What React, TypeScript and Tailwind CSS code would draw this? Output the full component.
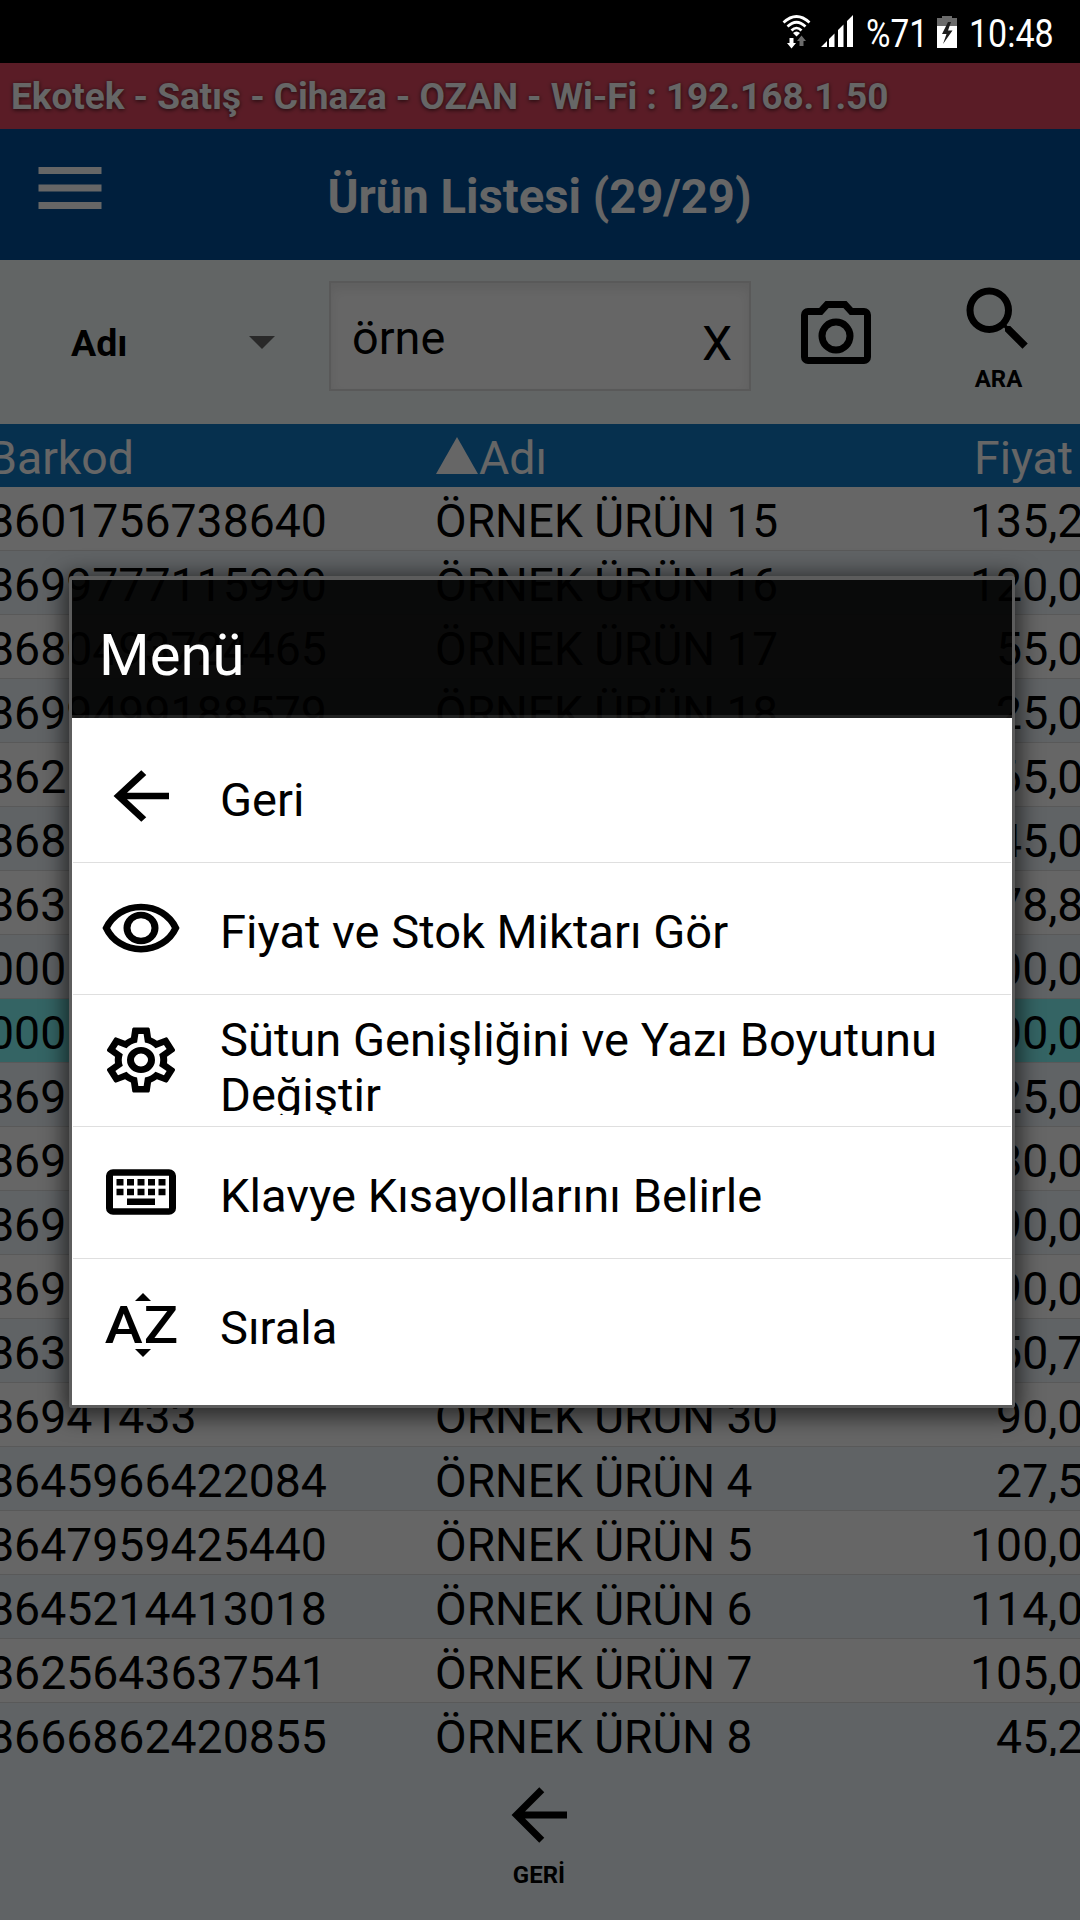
import type { ReactNode } from "react"

interface Product {
  barcode: string
  name: string
  price: string
  selected?: boolean
}

const products: Product[] = [
  { barcode: "8601756738640", name: "ÖRNEK ÜRÜN 15", price: "135,20" },
  { barcode: "8699777115990", name: "ÖRNEK ÜRÜN 16", price: "120,00" },
  { barcode: "8680493724465", name: "ÖRNEK ÜRÜN 17", price: "55,00" },
  { barcode: "8699499188579", name: "ÖRNEK ÜRÜN 18", price: "25,00" },
  { barcode: "862", name: "", price: "65,00" },
  { barcode: "868", name: "", price: "45,00" },
  { barcode: "863", name: "", price: "78,80" },
  { barcode: "000", name: "", price: "00,00" },
  { barcode: "000", name: "", price: "00,00", selected: true },
  { barcode: "869", name: "", price: "25,00" },
  { barcode: "869", name: "", price: "80,00" },
  { barcode: "869", name: "", price: "90,00" },
  { barcode: "869", name: "", price: "90,00" },
  { barcode: "863", name: "", price: "50,70" },
  { barcode: "86941433", name: "ÖRNEK ÜRÜN 30", price: "90,00" },
  { barcode: "8645966422084", name: "ÖRNEK ÜRÜN 4", price: "27,50" },
  { barcode: "8647959425440", name: "ÖRNEK ÜRÜN 5", price: "100,00" },
  { barcode: "8645214413018", name: "ÖRNEK ÜRÜN 6", price: "114,00" },
  { barcode: "8625643637541", name: "ÖRNEK ÜRÜN 7", price: "105,00" },
  { barcode: "8666862420855", name: "ÖRNEK ÜRÜN 8", price: "45,20" },
]

const paths = {
  menu: "M3,6H21V8H3V6M3,11H21V13H3V11M3,16H21V18H3V16Z",
  back: "M20,11V13H8L13.5,18.5L12.08,19.92L4.16,12L12.08,4.08L13.5,5.5L8,11H20Z",
  camera:
    "M20,4H16.83L15,2H9L7.17,4H4A2,2 0 0,0 2,6V18A2,2 0 0,0 4,20H20A2,2 0 0,0 22,18V6A2,2 0 0,0 20,4M20,18H4V6H8.05L9.88,4H14.12L15.95,6H20V18M12,7A5,5 0 0,0 7,12A5,5 0 0,0 12,17A5,5 0 0,0 17,12A5,5 0 0,0 12,7M12,15A3,3 0 0,1 9,12A3,3 0 0,1 12,9A3,3 0 0,1 15,12A3,3 0 0,1 12,15Z",
  search:
    "M9.5,3A6.5,6.5 0 0,1 16,9.5C16,11.11 15.41,12.59 14.44,13.73L14.71,14H15.5L20.5,19L19,20.5L14,15.5V14.71L13.73,14.44C12.59,15.41 11.11,16 9.5,16A6.5,6.5 0 0,1 3,9.5A6.5,6.5 0 0,1 9.5,3M9.5,5C7,5 5,7 5,9.5C5,12 7,14 9.5,14C12,14 14,12 14,9.5C14,7 12,5 9.5,5Z",
  cog: "M12,8A4,4 0 0,1 16,12A4,4 0 0,1 12,16A4,4 0 0,1 8,12A4,4 0 0,1 12,8M12,10A2,2 0 0,0 10,12A2,2 0 0,0 12,14A2,2 0 0,0 14,12A2,2 0 0,0 12,10M10,22C9.75,22 9.54,21.82 9.5,21.58L9.13,18.93C8.5,18.68 7.96,18.34 7.44,17.94L4.95,18.95C4.73,19.03 4.46,18.95 4.34,18.73L2.34,15.27C2.21,15.05 2.27,14.78 2.46,14.63L4.57,12.97L4.5,12L4.57,11L2.46,9.37C2.27,9.22 2.21,8.95 2.34,8.73L4.34,5.27C4.46,5.05 4.73,4.96 4.95,5.05L7.44,6.05C7.96,5.66 8.5,5.32 9.13,5.07L9.5,2.42C9.54,2.18 9.75,2 10,2H14C14.25,2 14.46,2.18 14.5,2.42L14.87,5.07C15.5,5.32 16.04,5.66 16.56,6.05L19.05,5.05C19.27,4.96 19.54,5.05 19.66,5.27L21.66,8.73C21.79,8.95 21.73,9.22 21.54,9.37L19.43,11L19.5,12L19.43,13L21.54,14.63C21.73,14.78 21.79,15.05 21.66,15.27L19.66,18.73C19.54,18.95 19.27,19.04 19.05,18.95L16.56,17.95C16.04,18.34 15.5,18.68 14.87,18.93L14.5,21.58C14.46,21.82 14.25,22 14,22H10M11.25,4L10.88,6.61C9.68,6.86 8.62,7.5 7.85,8.39L5.44,7.35L4.69,8.65L6.8,10.2C6.4,11.37 6.4,12.64 6.8,13.8L4.68,15.36L5.43,16.66L7.86,15.62C8.63,16.5 9.68,17.14 10.87,17.38L11.24,20H12.76L13.13,17.39C14.32,17.14 15.37,16.5 16.14,15.62L18.57,16.66L19.32,15.36L17.2,13.81C17.6,12.64 17.6,11.37 17.2,10.2L19.31,8.65L18.56,7.35L16.15,8.39C15.38,7.5 14.32,6.86 13.12,6.62L12.75,4H11.25Z",
  keyboard:
    "M4,5A2,2 0 0,0 2,7V17A2,2 0 0,0 4,19H20A2,2 0 0,0 22,17V7A2,2 0 0,0 20,5H4M4,7H20V17H4V7M5,8V10H7V8H5M8,8V10H10V8H8M11,8V10H13V8H11M14,8V10H16V8H14M17,8V10H19V8H17M5,11V13H7V11H5M8,11V13H10V11H8M11,11V13H13V11H11M14,11V13H16V11H14M17,11V13H19V11H17M8,14V16H16V14H8Z",
}

function Icon({ d, className }: { d: string; className: string }) {
  return (
    <svg viewBox="0 0 24 24" preserveAspectRatio="none" fill="currentColor" className={`shrink-0 ${className}`}>
      <path d={d} />
    </svg>
  )
}

function EyeIcon() {
  return (
    <svg
      viewBox="0 0 24 24"
      preserveAspectRatio="none"
      fill="none"
      stroke="currentColor"
      strokeWidth="2"
      className="h-[78px] w-[84px] shrink-0"
    >
      <path d="M2.080 12C3.750 8.090 7.550 5.500 12 5.500S20.250 8.090 21.920 12C20.250 15.910 16.450 18.500 12 18.500S3.750 15.910 2.080 12Z" />
      <circle cx="12" cy="12" r="4" />
    </svg>
  )
}

function SortIcon() {
  return (
    <div className="flex h-[78px] w-[84px] shrink-0 flex-col items-center pt-2 pl-1">
      <svg viewBox="0 0 16 8" className="h-2 w-4 shrink-0" fill="currentColor">
        <path d="M0 8L8 0L16 8Z" />
      </svg>
      <div className="-ml-1 flex h-12 shrink-0 scale-x-110 gap-[1px] text-[52px] leading-[49px] font-medium">
        <span>A</span>
        <span>Z</span>
      </div>
      <svg viewBox="0 0 16 8" className="h-2 w-4 shrink-0" fill="currentColor">
        <path d="M0 0L8 8L16 0Z" />
      </svg>
    </div>
  )
}

const menuItems: { label: string; icon: ReactNode }[] = [
  { label: "Geri", icon: <Icon d={paths.back} className="h-[78px] w-[84px]" /> },
  { label: "Fiyat ve Stok Miktarı Gör", icon: <EyeIcon /> },
  {
    label: "Sütun Genişliğini ve Yazı Boyutunu Değiştir",
    icon: <Icon d={paths.cog} className="h-[78px] w-[84px]" />,
  },
  { label: "Klavye Kısayollarını Belirle", icon: <Icon d={paths.keyboard} className="h-[78px] w-[84px]" /> },
  { label: "Sırala", icon: <SortIcon /> },
]

function StatusBar() {
  return (
    <div className="flex h-[63px] shrink-0 bg-black text-[39.5px] leading-[67px] text-white">
      <svg viewBox="0 0 30 34" className="mt-[15px] ml-[782px] h-[34px] w-[30px] shrink-0" fill="none">
        <g stroke="white" strokeWidth="2.7">
          <path d="M1.5 7.5Q14.5 -4.5 27.5 7.5" />
          <path d="M5.5 11.5Q14.5 3 23.5 11.5" />
          <path d="M9.5 15.5Q14.5 10.5 19.5 15.5" />
        </g>
        <path d="M11 18Q14.5 15 18 18L14.5 21.5Z" fill="white" />
        <path d="M7.5 23H11.5V28H14L9.5 33.5L5 28H7.5Z" fill="white" />
        <path d="M17.5 31H21.5V26H24L19.5 20.5L15 26H17.5Z" fill="#6b6b6b" />
      </svg>
      <svg viewBox="0 0 32 32" className="mt-[15px] ml-[9px] h-8 w-8 shrink-0" fill="white">
        <path d="M0 32L6 26V32ZM8 24L13.500 18.500V32H8ZM17 15L22.500 9.500V32H17ZM26 6L32 0V32H26Z" />
      </svg>
      <span className="ml-[13px] w-[70px] origin-left scale-x-[0.845]">%71</span>
      <svg viewBox="0 0 20 32" className="mt-4 ml-[1px] h-8 w-5 shrink-0">
        <path d="M0 2H5V0H15V2H20V10H0Z" fill="#6b6b6b" />
        <path d="M0 10H20V32H0Z" fill="white" />
        <path d="M11 6L5 18H9.500L6 28L15.500 14.500H11L14 6Z" fill="#1c1c1c" />
      </svg>
      <span className="ml-[12px] origin-left scale-x-[0.86]">10:48</span>
    </div>
  )
}

function SearchBar() {
  return (
    <div className="flex h-[164px] shrink-0 bg-[#f5fdfd]">
      <div className="flex w-[329px] shrink-0 items-center pt-[3px] pr-[54px] pl-[71px]">
        <span className="flex-1 text-[37.500px] font-bold">Adı</span>
        <svg viewBox="0 0 26 13" className="-mt-[3px] h-[13px] w-[26px]" fill="#666666">
          <path d="M0 0H26L13 13Z" />
        </svg>
      </div>
      <div className="mt-[21px] flex h-[110px] w-[422px] shrink-0 justify-between border-2 border-[#dedede] bg-white pr-[17px] pl-[21px] text-[46.800px] leading-[110px] shadow-[inset_0_6px_12px_rgba(0,0,0,0.08)]">
        <span>örne</span>
        <span className="pt-1.5 text-[48px] leading-[110px]">X</span>
      </div>
      <Icon d={paths.camera} className="mt-[34px] ml-[43px] size-[84px]" />
      <div className="ml-[78px] flex w-[84px] flex-col items-center pt-[17px]">
        <Icon d={paths.search} className="size-[84px]" />
        <span className="pl-[1px] text-2xl leading-9 font-bold">ARA</span>
      </div>
    </div>
  )
}

function ProductTable() {
  return (
    <div className="h-[1332px] shrink-0 overflow-hidden text-[46.400px] leading-[68px] whitespace-nowrap">
      <div className="-ml-3 flex h-[63px] w-[1121px] bg-[#0f78c4] text-white">
        <span className="w-[448px] shrink-0">Barkod</span>
        <span className="flex w-[538px] shrink-0">
          <svg viewBox="0 0 42 37" className="mt-[13px] mr-[1px] h-[37px] w-[42px]" fill="currentColor">
            <path d="M0 37L21 0L42 37Z" />
          </svg>
          Adı
        </span>
        <span>Fiyat</span>
      </div>
      {products.map((product, i) => (
        <div
          key={i}
          className={`-ml-3 flex h-16 w-[1121.500px] border-b border-[#dfdfdf] ${
            product.selected ? "bg-[#83f9f9]" : i % 2 ? "bg-[#eff8fd]" : "bg-white"
          }`}
        >
          <span className="w-[447px] shrink-0">{product.barcode}</span>
          <span className="flex-1 text-[46px]">{product.name}</span>
          <span className="text-right">{product.price}</span>
        </div>
      ))}
    </div>
  )
}

function MenuDialog() {
  return (
    <div className="absolute top-[576px] left-[69px] w-[946px] rounded-[3px] border-[3px] border-t-4 border-[#5c5c5c] bg-clip-padding shadow-[0_4px_22px_5px_rgba(0,0,0,0.6)]">
      <h2 className="h-[138px] border-b-[3px] border-white/10 bg-black/90 pl-[27px] text-[58px] leading-[150px] text-white">
        Menü
      </h2>
      <ul className="bg-white px-[1px] pt-[13px] pb-[14px]">
        {menuItems.map((item) => (
          <li
            key={item.label}
            className="flex h-[132px] items-center border-b border-[#dfdfdf] pl-[26px] last:border-transparent"
          >
            <div className="mb-[2px] shrink-0">{item.icon}</div>
            <div className="mt-[6px] ml-[37px] flex h-[103px] w-[750px] flex-col overflow-hidden text-[47.080px] leading-[55px]">
              <span className="my-auto">{item.label}</span>
            </div>
          </li>
        ))}
      </ul>
    </div>
  )
}

export default function App() {
  return (
    <div className="relative flex h-[1920px] w-[1080px] flex-col overflow-hidden bg-[#eff8fd] font-['Roboto',sans-serif] text-black">
      <StatusBar />
      <div className="h-[66px] shrink-0 bg-[#e04860] pl-[11px] text-[37px] leading-[67px] font-bold tracking-[-0.06px] text-white [text-shadow:0_1px_4px_rgba(0,0,0,0.7)]">
        Ekotek - Satış - Cihaza - OZAN - Wi-Fi : 192.168.1.50
      </div>
      <header className="flex h-[131px] shrink-0 bg-[#004e9a] text-white">
        <Icon d={paths.menu} className="mt-[17px] ml-[28px] size-[84px]" />
        <h1 className="mr-[113px] flex-1 text-center text-[47.200px] leading-[136px] font-bold">Ürün Listesi (29/29)</h1>
      </header>
      <SearchBar />
      <ProductTable />
      <footer className="flex flex-1 flex-col items-center pt-[17px] pr-[2px]">
        <Icon d={paths.back} className="size-[84px]" />
        <span className="text-2xl leading-9 font-bold">GERİ</span>
      </footer>

      <div className="absolute inset-x-0 top-[63px] bottom-0 bg-black/60" />
      <MenuDialog />
    </div>
  )
}
